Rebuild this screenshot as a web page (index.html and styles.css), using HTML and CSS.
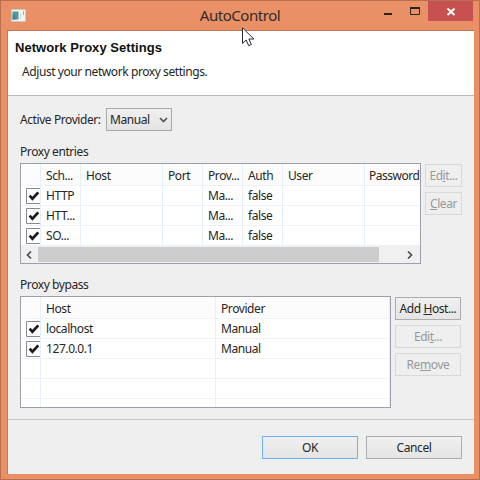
FILE: index.html
```html
<!DOCTYPE html>
<html lang="en">
<head>
<meta charset="utf-8">
<title>AutoControl</title>
<link rel="stylesheet" href="styles.css">
</head>
<body>
<svg width="0" height="0" class="defs" aria-hidden="true">
  <symbol id="check" viewBox="0 0 15 16"><path d="M15 .5H.5v15H15" fill="#fff" stroke="#8a8a8a"/><path d="M3.600 7.700 6.400 10.700 12.300 4.300" fill="none" stroke="#1c1c1c" stroke-width="2.700"/></symbol>
</svg>
<div class="window">
  <header class="titlebar">
    <svg class="app-icon" width="15" height="13" viewBox="0 0 15 13"><rect x=".5" y=".5" width="14" height="12" fill="#f2f5f4" stroke="#c9c5bf"/><rect x="1.5" y="2.5" width="6" height="8" fill="#4c9c91"/><path d="M1.5 6h3v4.500h-3z" fill="#4d82a0"/><path d="M9.500 3v7" stroke="#d2dcda"/><path d="M12.500 2v4" stroke="#8db9ad"/></svg>
    <h1 class="title">AutoControl</h1>
    <div class="controls">
      <svg width="98" height="21" viewBox="0 0 98 21"><path d="M6 12h8v2H6z" fill="#292422"/><path d="M32.500 6.500h9v7h-9z" fill="none" stroke="#292422"/><path d="M32 7h10" stroke="#292422" stroke-width="2"/><path d="M50 0h45v20H50z" fill="#c75050"/><path d="M69.500 7.500l7 6.500M76.500 7.500l-7 6.500" stroke="#fff" stroke-width="1.900"/></svg>
    </div>
  </header>
  <main class="client">
    <section class="banner">
      <h2>Network Proxy Settings</h2>
      <p>Adjust your network proxy settings.</p>
    </section>
    <section class="content">
      <div class="provider"><span class="lbl-provider">Active Provider:</span><div class="select"><span>Manual</span><svg width="9" height="6" viewBox="0 0 9 6"><path d="M1 1l3.500 3.500L8 1" fill="none" stroke="#555" stroke-width="1.700"/></svg></div></div>
      <div class="label">Proxy entries</div>
      <div class="group">
        <div class="table entries">
          <div class="row head"><span></span><span>Sch...</span><span>Host</span><span>Port</span><span>Prov...</span><span>Auth</span><span>User</span><span class="password">Password</span></div>
          <div class="row"><span><svg class="check"><use href="#check"/></svg></span><span>HTTP</span><span></span><span></span><span>Ma...</span><span>false</span><span></span><span></span></div>
          <div class="row"><span><svg class="check"><use href="#check"/></svg></span><span>HTT...</span><span></span><span></span><span>Ma...</span><span>false</span><span></span><span></span></div>
          <div class="row"><span><svg class="check"><use href="#check"/></svg></span><span>SO...</span><span></span><span></span><span>Ma...</span><span>false</span><span></span><span></span></div>
          <div class="scroll"><svg width="6" height="8" viewBox="0 0 6 8"><path d="M5 .5 1.500 4 5 7.500" fill="none" stroke="#505050" stroke-width="1.700"/></svg><i></i><svg width="6" height="8" viewBox="0 0 6 8"><path d="M1 .5 4.500 4 1 7.500" fill="none" stroke="#505050" stroke-width="1.700"/></svg></div>
        </div>
        <div class="buttons small"><button disabled>Ed<u>i</u>t...</button><button disabled><u>C</u>lear</button></div>
      </div>
      <div class="label">Proxy bypass</div>
      <div class="group">
        <div class="table bypass">
          <div class="row head"><span></span><span>Host</span><span>Provider</span></div>
          <div class="row"><span><svg class="check"><use href="#check"/></svg></span><span>localhost</span><span>Manual</span></div>
          <div class="row"><span><svg class="check"><use href="#check"/></svg></span><span>127.0.0.1</span><span>Manual</span></div>
          <div class="row"><span></span><span></span><span></span></div>
          <div class="row"><span></span><span></span><span></span></div>
          <div class="row"><span></span><span></span><span></span></div>
        </div>
        <div class="buttons"><button>Add <u>H</u>ost...</button><button disabled>Edi<u>t</u>...</button><button disabled>Re<u>m</u>ove</button></div>
      </div>
    </section>
    <footer class="footer"><button class="default">OK</button><button>Cancel</button></footer>
  </main>
  <svg class="cursor" width="13" height="20" viewBox="0 0 13 20"><path d="M.5.8v15.700l3.700-3.500 2.500 5.700 2.700-1.200-2.500-5.500h5z" fill="#fff" stroke="#29283a"/></svg>
</div>
</body>
</html>
```

FILE: styles.css
```css
* { box-sizing: border-box; }
body { margin: 0; font: 12px/16px "Noto Sans", "Open Sans", sans-serif; color: #262626; letter-spacing: -0.42px; }
h1, h2, p { margin: 0; font-weight: 400; }
.defs { position: absolute; }
.window { position: relative; width: 480px; height: 480px; background: #e99066; border: 1px solid #b97051; display: flex; flex-direction: column; padding: 0 3px 5px 6px; }
.titlebar { height: 29px; display: grid; grid-template-columns: 96px 1fr 98px; }
.app-icon { margin: 8px 0 0 4px; }
.title { font-size: 15px; line-height: 20px; padding-top: 4px; text-align: center; color: #332b27; letter-spacing: -0.45px; margin-right: 1px; }
.controls { height: 21px; }
.controls svg { display: block; }
.client { width: 467px; height: 444px; border-top: 1px solid #c37654; border-left: 1px solid #c37654; background: #efefef; display: flex; flex-direction: column; }
.banner { height: 65px; background: #fff; border-bottom: 1px solid #b9b9b9; }
.banner h2 { font: 700 13px/18px "Liberation Sans", sans-serif; color: #111; margin: 8px 0 0 7px; letter-spacing: 0.05px; }
.banner p { margin: 7px 0 0 14px; }
.content { height: 324px; padding: 12px 12px 0; border-bottom: 1px solid #c5c5c5; }
.provider { display: flex; height: 23px; align-items: center; }
.lbl-provider { width: 86px; white-space: nowrap; }
.select { width: 66px; height: 23px; border: 1px solid #a9a9a9; background: linear-gradient(#f0f0f0, #e4e4e4); display: flex; align-items: center; justify-content: space-between; padding: 0 3px; }
.label { height: 16px; margin: 13px 0 3px; }
.group { display: flex; justify-content: space-between; width: 441px; }
.table { background: #fff; border: 1px solid #9a9fa9; overflow: hidden; }
.entries { width: 401px; height: 101px; }
.bypass { width: 371px; height: 112px; }
.row { display: grid; height: 20px; border-bottom: 1px solid #edf2f8; }
.head { height: 22px; background: #fcfcfc; }
.entries .row { grid-template-columns: 20px 40px 82px 40px 40px 40px 82px 1fr; }
.bypass .row { grid-template-columns: 20px 175px 174px; }
.row span { border-right: 1px solid #e7eff8; padding: 2px 0 0 5px; white-space: nowrap; overflow: hidden; }
.head span { padding-top: 4px; }
.head .password { padding-left: 4px; letter-spacing: -0.5px; }
.row span:last-child { border-right: 0; }
.bypass .row span:last-child { border-right: 1px solid #e7eff8; }
.check { display: block; width: 15px; height: 16px; }
.scroll { display: flex; height: 17px; align-items: center; background: #f0f0f0; padding: 0 6px 0 5px; }
.scroll i { height: 15px; width: 341px; background: #cdcdcd; margin-left: 6px; margin-right: 28px; flex: none; }
.buttons { width: 66px; padding-top: 1px; display: flex; flex-direction: column; gap: 5px; }
.buttons.small { width: 37px; margin-right: -1px; }
button { font: inherit; color: #262626; letter-spacing: inherit; white-space: nowrap; height: 23px; padding: 0; border: 1px solid #adadad; background: linear-gradient(#f0f0f0, #e5e5e5); text-align: center; }
button:disabled { color: #999; border-color: #d9d9d9; background: #efefef; }
u { text-underline-offset: 1px; text-decoration-thickness: 1px; }
.footer { display: flex; justify-content: flex-end; gap: 8px; padding: 16px 12px 0 0; }
.footer button { width: 96px; }
.footer .default { border-color: #6cb0f5; }
.cursor { position: absolute; left: 241px; top: 26px; }
```
